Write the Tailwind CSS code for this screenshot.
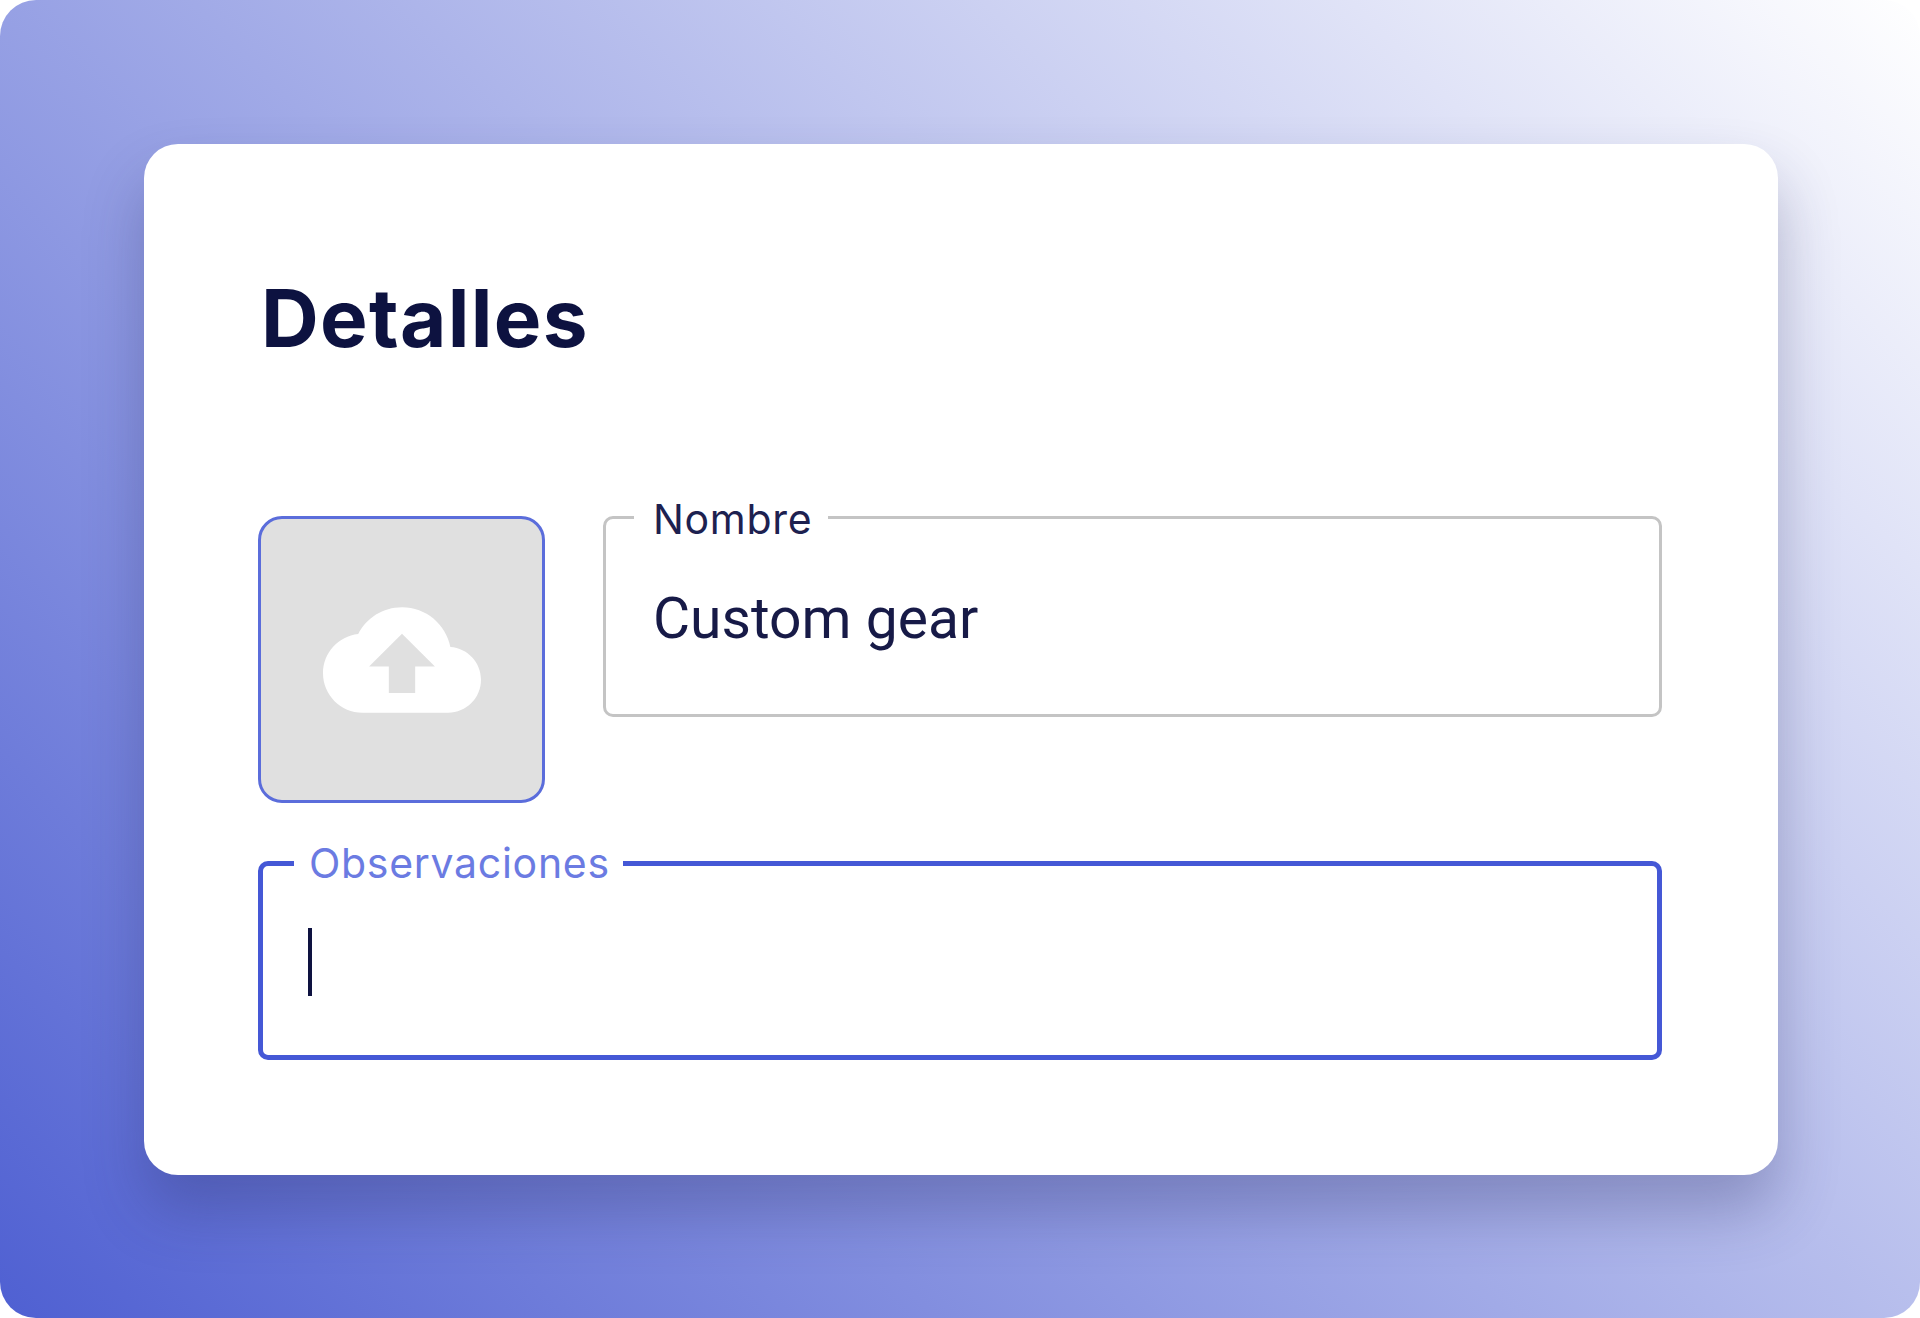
<!DOCTYPE html>
<html lang="es">
<head>
  <meta charset="UTF-8">
  <script src="https://cdn.jsdelivr.net/npm/@tailwindcss/browser@4"></script>
  <title>Detalles</title>
</head>
<body class="bg-white">
  <div class="h-[1318px] w-[1920px] rounded-[36px] bg-linear-45/srgb from-[#4f60d2] to-white pt-[144px] pl-[144px] pr-[142px] pb-[143px] font-['Inter',sans-serif]">
    <div class="h-[1031px] rounded-[34px] bg-white pt-[124px] pl-[114px] pr-[116px] shadow-[0_36px_60px_rgba(40,44,100,0.3)]">
      <h1 class="ml-[3px] h-[248px] text-[80px] font-bold leading-[100px] tracking-[1.3px] text-[#0d1240]">Detalles</h1>

      <div class="flex gap-[58px]">
        <div class="flex h-[287px] w-[287px] items-center justify-center rounded-[24px] border-[3px] border-[#5b6ddb] bg-[#e0e0e0]">
          <svg class="h-[158px] w-[158px]" viewBox="0 0 24 24" fill="#ffffff">
            <path d="M19.35 10.04C18.67 6.59 15.64 4 12 4 9.11 4 6.6 5.64 5.35 8.04 2.34 8.36 0 10.91 0 14c0 3.31 2.69 6 6 6h13c2.76 0 5-2.24 5-5 0-2.64-2.05-4.78-4.65-4.96zM14 13v4h-4v-4H7l5-5 5 5h-3z"></path>
          </svg>
        </div>
        <div class="relative h-[201px] flex-1 rounded-[10px] border-[3px] border-[#c4c4c4] pl-[47px] pt-[66px]">
          <span class="absolute left-[28px] top-0 -translate-y-1/2 bg-white pl-[19px] pr-[16px] text-[41px] leading-none tracking-[0.7px] text-[#1d2150]">Nombre</span>
          <div class="font-['Roboto',sans-serif] text-[57px] leading-[68px] text-[#171a47]">Custom gear</div>
        </div>
      </div>

      <div class="relative mt-[58px] h-[199px] rounded-[10px] border-[5px] border-[#4558d6] pl-[45px] pt-[62px]">
        <span class="absolute left-[31px] top-[-3px] -translate-y-1/2 bg-white pl-[15px] pr-[13px] text-[41px] leading-none tracking-[0.7px] text-[#6b7be2]">Observaciones</span>
        <div class="h-[68px] w-[4px] bg-[#0e1240]"></div>
      </div>
    </div>
  </div>
</body>
</html>
